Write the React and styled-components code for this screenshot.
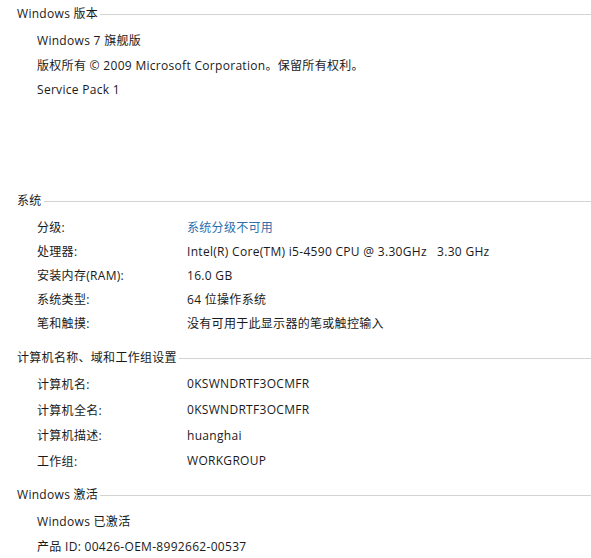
import styled, { createGlobalStyle } from 'styled-components';

const GlobalStyle = createGlobalStyle`
  html, body {
    margin: 0;
    padding: 0;
    background: #fff;
  }

  body {
    font-family: 'Open Sans', 'Noto Sans CJK SC', sans-serif;
    font-size: 12px;
    letter-spacing: 0.3px;
    color: #1a1a1a;
  }
`;

const Page = styled.div`
  width: 591px;
  height: 558px;
  overflow: hidden;
  padding: 5px 0 0 17px;
  box-sizing: border-box;
`;

const Section = styled.section`
  margin-bottom: ${({ gap }) => gap}px;
`;

const Header = styled.div`
  display: flex;
  align-items: center;
  height: 16px;

  span {
    white-space: nowrap;
  }

  &::after {
    content: '';
    flex: 1;
    height: 1px;
    margin: 3px 0 0 2px;
    background: #d3d3d3;
  }
`;

const Rows = styled.div`
  display: grid;
  grid-template-columns: 150px 1fr;
  grid-auto-rows: ${({ rowHeight }) => rowHeight}px;
  align-items: center;
  padding: ${({ top }) => top}px 0 0 20px;
`;

const Label = styled.div`
  white-space: nowrap;
  grid-column: ${({ wide }) => (wide ? '1 / 3' : 'auto')};
`;

const Value = styled.div`
  white-space: pre;
  color: ${({ link }) => (link ? '#2b6fae' : 'inherit')};
`;

const sections = [
  {
    title: 'Windows 版本',
    gap: 90,
    rowHeight: 25,
    top: 6,
    lines: ['Windows 7 旗舰版', '版权所有 © 2009 Microsoft Corporation。保留所有权利。', 'Service Pack 1'],
  },
  {
    title: '系统',
    gap: 14,
    rowHeight: 24,
    top: 7,
    rows: [
      ['分级:', '系统分级不可用', true],
      ['处理器:', 'Intel(R) Core(TM) i5-4590 CPU @ 3.30GHz   3.30 GHz'],
      ['安装内存(RAM):', '16.0 GB'],
      ['系统类型:', '64 位操作系统'],
      ['笔和触摸:', '没有可用于此显示器的笔或触控输入'],
    ],
  },
  {
    title: '计算机名称、域和工作组设置',
    gap: 12,
    rowHeight: 25.7,
    top: 6,
    rows: [
      ['计算机名:', '0KSWNDRTF3OCMFR'],
      ['计算机全名:', '0KSWNDRTF3OCMFR'],
      ['计算机描述:', 'huanghai'],
      ['工作组:', 'WORKGROUP'],
    ],
  },
  {
    title: 'Windows 激活',
    gap: 0,
    rowHeight: 25,
    top: 7,
    lines: ['Windows 已激活', '产品 ID: 00426-OEM-8992662-00537'],
  },
];

export default function App() {
  return (
    <>
      <GlobalStyle />
      <Page>
        {sections.map((s) => (
          <Section key={s.title} gap={s.gap}>
            <Header>
              <span>{s.title}</span>
            </Header>
            <Rows rowHeight={s.rowHeight} top={s.top}>
              {s.lines &&
                s.lines.map((line) => (
                  <Label key={line} wide>
                    {line}
                  </Label>
                ))}
              {s.rows &&
                s.rows.map(([label, value, link]) => [
                  <Label key={label}>{label}</Label>,
                  <Value key={label + '-v'} link={link}>
                    {value}
                  </Value>,
                ])}
            </Rows>
          </Section>
        ))}
      </Page>
    </>
  );
}
